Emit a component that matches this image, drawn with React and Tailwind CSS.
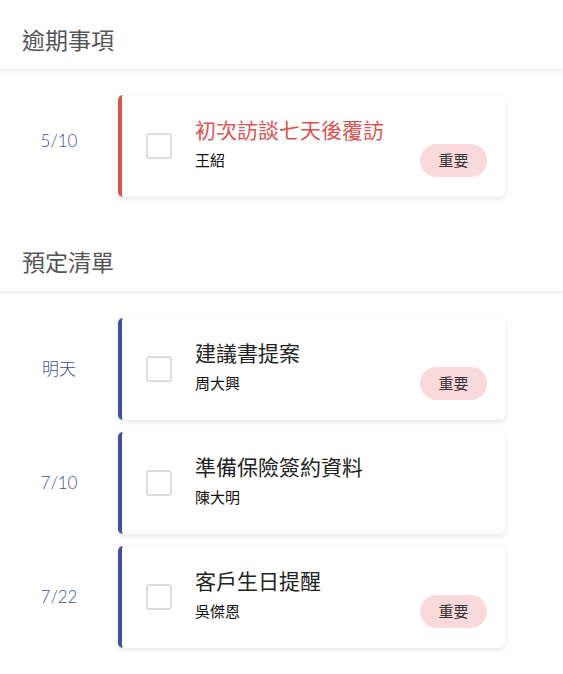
import React from "react";

const overdue = [
  { date: "5/10", title: "初次訪談七天後覆訪", name: "王紹", important: true, late: true },
];

const planned = [
  { date: "明天", title: "建議書提案", name: "周大興", important: true },
  { date: "7/10", title: "準備保險簽約資料", name: "陳大明", important: false },
  { date: "7/22", title: "客戶生日提醒", name: "吳傑恩", important: true },
];

const cjk = { fontFamily: '"Noto Sans", "Noto Sans CJK TC", sans-serif' };

function SectionHeader({ title }) {
  return (
    <div className="h-[70px] pl-[22px] pt-[25px] bg-white shadow-[0_2px_3px_rgba(0,0,0,0.06)] border-b border-[#f0f0f0]">
      <h2 className="text-[23px] leading-[30px] text-[#555]">{title}</h2>
    </div>
  );
}

function TaskRow({ task }) {
  return (
    <div className="flex items-center">
      <div
        className={
          "w-[118px] text-center text-[17px] font-light text-[#44508f] " +
          (task.late ? "pb-[10px]" : "pb-[0px]")
        }
        style={{ fontFamily: 'Lato, "Noto Sans CJK TC", sans-serif' }}
      >
        {task.date}
      </div>
      <div
        className={
          "flex-1 mr-[58px] h-[102px] flex items-center bg-white rounded-[5px] border-l-4 shadow-[0_2px_5px_rgba(0,0,0,0.10)] " +
          (task.late ? "border-[#d9534f]" : "border-[#3f51a5]")
        }
      >
        <div className="ml-[24px] w-[26px] h-[26px] border-2 border-[#dcdcdc] rounded-[3px] shrink-0" />
        <div className="ml-[23px] flex-1 pb-[6px]">
          <div className={"text-[21px] leading-[28px] " + (task.late ? "text-[#d9534f]" : "text-[#222]")}>
            {task.title}
          </div>
          <div className="mt-[6px] text-[15px] leading-[20px] text-[#111]">{task.name}</div>
        </div>
        {task.important && (
          <div className="self-end mb-[20px] mr-[18px] w-[67px] h-[33px] rounded-full bg-[#f9d9d9] flex items-center justify-center text-[15px] text-[#333]">
            重要
          </div>
        )}
      </div>
    </div>
  );
}

export default function App() {
  return (
    <div className="w-[563px] h-[674px] bg-white overflow-hidden" style={cjk}>
      <SectionHeader title="逾期事項" />
      <div className="pt-[25px] pb-[25px] flex flex-col gap-[12px]">
        {overdue.map((t) => (
          <TaskRow key={t.title} task={t} />
        ))}
      </div>
      <SectionHeader title="預定清單" />
      <div className="pt-[26px] flex flex-col gap-[12px]">
        {planned.map((t) => (
          <TaskRow key={t.title} task={t} />
        ))}
      </div>
    </div>
  );
}
